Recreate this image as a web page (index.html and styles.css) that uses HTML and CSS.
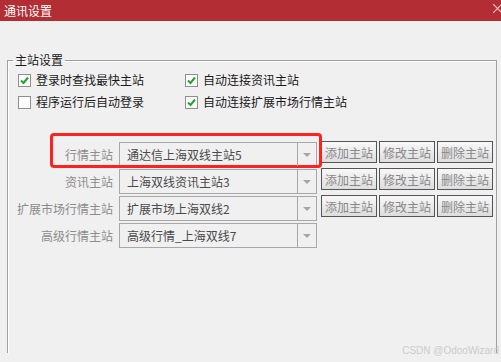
FILE: index.html
```html
<!DOCTYPE html>
<html>
<head>
    <title>通讯设置</title>
    <meta charset="UTF-8">
    <link rel="stylesheet" href="styles.css">
</head>
<body>
    <div class="titlebar">
        <span class="title">通讯设置</span>
        <svg class="close" width="8" height="9" viewBox="0 0 8 9">
            <path d="M0 0 L9 9 M0 9 L9 0" stroke="#f4c9cb" stroke-width="1.1" fill="none"/>
        </svg>
    </div>

    <fieldset class="group">
        <legend>主站设置</legend>
        <div class="options">
            <label class="check"><span class="box"><svg width="11" height="11" viewBox="0 0 11 11"><path d="M2 5.5 L4.5 8 L9 2.5" stroke="#22a32a" stroke-width="2" fill="none"/></svg></span>登录时查找最快主站</label>
            <label class="check"><span class="box"><svg width="11" height="11" viewBox="0 0 11 11"><path d="M2 5.5 L4.5 8 L9 2.5" stroke="#22a32a" stroke-width="2" fill="none"/></svg></span>自动连接资讯主站</label>
            <label class="check"><span class="box"></span>程序运行后自动登录</label>
            <label class="check"><span class="box"><svg width="11" height="11" viewBox="0 0 11 11"><path d="M2 5.5 L4.5 8 L9 2.5" stroke="#22a32a" stroke-width="2" fill="none"/></svg></span>自动连接扩展市场行情主站</label>
        </div>

        <div class="servers">
            <div class="highlight"></div>
            <div class="row">
                <span class="name">行情主站</span>
                <div class="combo"><span class="value">通达信上海双线主站5</span><span class="arrow"></span></div>
                <div class="actions"><button>添加主站</button><button>修改主站</button><button>删除主站</button></div>
            </div>
            <div class="row">
                <span class="name">资讯主站</span>
                <div class="combo"><span class="value">上海双线资讯主站3</span><span class="arrow"></span></div>
                <div class="actions"><button>添加主站</button><button>修改主站</button><button>删除主站</button></div>
            </div>
            <div class="row">
                <span class="name">扩展市场行情主站</span>
                <div class="combo"><span class="value">扩展市场上海双线2</span><span class="arrow"></span></div>
                <div class="actions"><button>添加主站</button><button>修改主站</button><button>删除主站</button></div>
            </div>
            <div class="row">
                <span class="name">高级行情主站</span>
                <div class="combo"><span class="value">高级行情_上海双线7</span><span class="arrow"></span></div>
            </div>
        </div>
    </fieldset>

    <div class="watermark">CSDN @OdooWizard</div>
</body>
</html>
```

FILE: styles.css
```css
html, body {
    margin: 0;
    height: 100%;
    overflow: hidden;
}
body {
    background-color: #f0f0f0;
    font-family: "Noto Sans CJK SC", "Liberation Sans", sans-serif;
    font-size: 12px;
    color: #1a1a1a;
    position: relative;
}
.titlebar {
    height: 21px;
    background-color: #b32e34;
    display: flex;
    align-items: center;
    justify-content: space-between;
    padding-left: 4px;
}
.title {
    color: #ffffff;
    line-height: 21px;
}
.close {
    margin-top: -4px;
}
.group {
    margin: 31px 0 0 7px;
    padding: 0;
    width: 488px;
    height: 300px;
    border: 1px solid #a0a0a0;
    border-bottom: none;
    box-shadow: inset 1px 1px 0 #ffffff;
}
.group legend {
    margin-left: 5px;
    padding: 0 2px;
    line-height: 16px;
}
.options {
    display: grid;
    grid-template-columns: 167px auto;
    padding: 1px 0 0 10px;
}
.check {
    display: flex;
    align-items: center;
    gap: 5px;
    line-height: 22px;
}
.box {
    width: 11px;
    height: 11px;
    border: 1px solid #8f8f8f;
    background-color: #fbfbfb;
    display: flex;
}
.servers {
    position: relative;
    margin-top: 29px;
    display: flex;
    flex-direction: column;
    gap: 2px;
}
.row {
    display: flex;
    align-items: flex-start;
}
.name {
    width: 105px;
    margin-right: 6px;
    text-align: right;
    line-height: 25px;
    color: #8c8c8c;
}
.combo {
    width: 196px;
    height: 23px;
    border: 1px solid #a8a8a8;
    display: flex;
}
.value {
    flex: 1;
    padding-left: 7px;
    line-height: 23px;
    color: #4a4a4a;
}
.arrow {
    width: 18px;
    border-left: 1px solid #a8a8a8;
    position: relative;
}
.arrow::after {
    content: "";
    position: absolute;
    left: 5px;
    top: 10px;
    border-left: 4px solid transparent;
    border-right: 4px solid transparent;
    border-top: 4px solid #a6a6a6;
}
.actions {
    display: flex;
    gap: 2px;
    margin: -1px 0 0 4px;
}
.actions button {
    width: 56px;
    height: 22px;
    padding: 0;
    border: 1px solid #555555;
    background: linear-gradient(#f8f8f8, #dddddd);
    font-family: inherit;
    font-size: 12px;
    color: #888888;
}
.highlight {
    position: absolute;
    left: 42px;
    top: -9px;
    width: 266px;
    height: 29px;
    border: 3px solid #ff2020;
    border-radius: 4px;
}
.watermark {
    position: absolute;
    right: 2px;
    bottom: 6px;
    font-family: "Liberation Sans", Arial, sans-serif;
    font-size: 10px;
    color: #cccccc;
}
```
